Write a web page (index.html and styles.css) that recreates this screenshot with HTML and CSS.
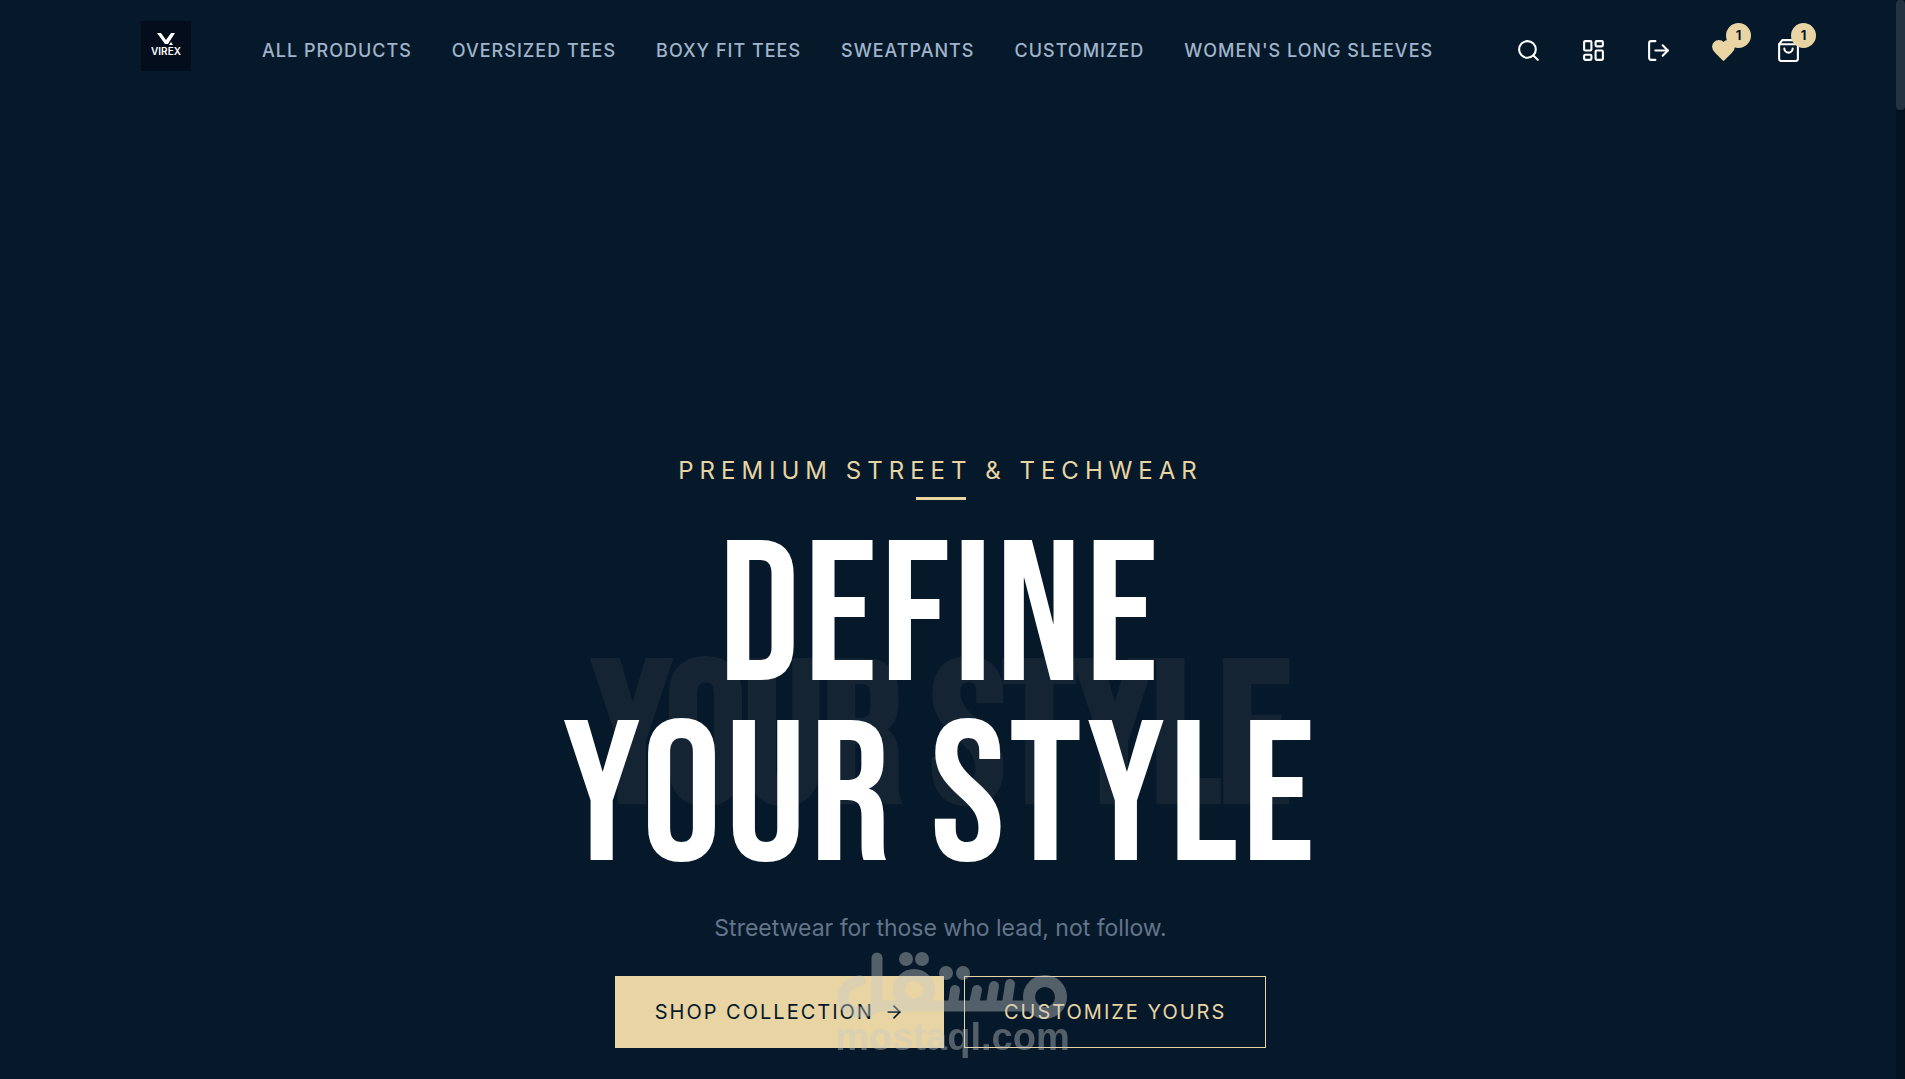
FILE: index.html
```html
<!DOCTYPE html>
<html lang="en">
<head>
    <meta charset="UTF-8">
    <meta name="viewport" content="width=device-width, initial-scale=1.0">
    <title>VIREX | Premium Street &amp; Techwear</title>
    <link rel="stylesheet" href="styles.css">
</head>
<body>
    <header class="header">
        <a href="#" class="logo" aria-label="Virex home">
            <svg class="logo-mark" viewBox="0 0 18 12" aria-hidden="true">
                <path d="M0 0h4l5 7 5-7h4l-7 11H8z" fill="#fff"/>
                <path d="M12 12l2-3 2 3z" fill="#fff"/>
            </svg>
            <span class="logo-name">VIREX</span>
        </a>

        <nav class="nav">
            <a href="#">ALL PRODUCTS</a>
            <a href="#">OVERSIZED TEES</a>
            <a href="#">BOXY FIT TEES</a>
            <a href="#">SWEATPANTS</a>
            <a href="#">CUSTOMIZED</a>
            <a href="#">WOMEN'S LONG SLEEVES</a>
        </nav>

        <div class="actions">
            <button class="icon-btn" aria-label="Search">
                <svg viewBox="0 0 24 24"><circle cx="11" cy="11" r="8"/><path d="m21 21-4.3-4.3"/></svg>
            </button>
            <button class="icon-btn" aria-label="Dashboard">
                <svg viewBox="0 0 24 24"><rect x="3" y="3" width="7" height="9" rx="1"/><rect x="14" y="3" width="7" height="5" rx="1"/><rect x="14" y="12" width="7" height="9" rx="1"/><rect x="3" y="16" width="7" height="5" rx="1"/></svg>
            </button>
            <button class="icon-btn" aria-label="Log out">
                <svg viewBox="0 0 24 24"><path d="M9 21H5a2 2 0 0 1-2-2V5a2 2 0 0 1 2-2h4"/><path d="m16 17 5-5-5-5"/><path d="M21 12H9"/></svg>
            </button>
            <button class="icon-btn wishlist" aria-label="Wishlist">
                <svg viewBox="0 0 24 24"><path d="M19 14c1.49-1.46 3-3.21 3-5.5A5.5 5.5 0 0 0 16.5 3c-1.76 0-3 .5-4.5 2-1.5-1.5-2.74-2-4.5-2A5.5 5.5 0 0 0 2 8.5c0 2.3 1.5 4.05 3 5.5l7 7Z"/></svg>
                <span class="badge">1</span>
            </button>
            <button class="icon-btn" aria-label="Cart">
                <svg viewBox="0 0 24 24"><path d="M6 2 3 6v14a2 2 0 0 0 2 2h14a2 2 0 0 0 2-2V6l-3-4Z"/><path d="M3 6h18"/><path d="M16 10a4 4 0 0 1-8 0"/></svg>
                <span class="badge">1</span>
            </button>
        </div>
    </header>

    <main class="hero">
        <p class="tagline">PREMIUM STREET &amp; TECHWEAR</p>
        <div class="title-wrap">
            <span class="ghost" aria-hidden="true">YOUR STYLE</span>
            <h1 class="title">DEFINE<br>YOUR STYLE</h1>
        </div>
        <p class="subtitle">Streetwear for those who lead, not follow.</p>
        <div class="hero-buttons">
            <button class="btn btn-primary">
                SHOP COLLECTION
                <svg viewBox="0 0 24 24" aria-hidden="true"><path d="M5 12h14"/><path d="m12 5 7 7-7 7"/></svg>
            </button>
            <button class="btn btn-outline">CUSTOMIZE YOURS</button>
        </div>
    </main>

    <!-- watermark -->
    <div class="watermark" aria-hidden="true">
        <svg viewBox="0 0 230 68">
            <g fill="none" stroke="currentColor" stroke-linecap="round" stroke-linejoin="round">
                <path stroke-width="11" d="M22 29C-1 31 0 61 21 60 33 60 39 56 39 44V6"/>
                <path stroke-width="11" d="M39 54H189"/>
                <circle stroke-width="12" cx="76" cy="38" r="15"/>
                <path stroke-width="10" d="M115 52l2-14M136 52l3-14M153 52l3-18M169 52l3-20"/>
                <circle stroke-width="12" cx="207" cy="45" r="16"/>
            </g>
            <g fill="currentColor">
                <circle cx="68" cy="7" r="7"/>
                <circle cx="84" cy="7" r="7"/>
                <circle cx="108" cy="21" r="7"/>
                <circle cx="125" cy="21" r="7"/>
            </g>
        </svg>
        <span>mostaql.com</span>
    </div>

    <div class="scroll-track" aria-hidden="true"><div class="scroll-thumb"></div></div>
</body>
</html>
```

FILE: styles.css
```css
* {
    box-sizing: border-box;
    margin: 0;
    padding: 0;
}

body {
    font-family: Inter, "Liberation Sans", sans-serif;
    background: #06192a;
    color: #fff;
    min-height: 100vh;
    overflow: hidden;
}

a {
    text-decoration: none;
}

button {
    font-family: inherit;
    cursor: pointer;
}

/* Header */
.header {
    display: flex;
    align-items: center;
    height: 100px;
    padding: 0 93px 0 141px;
}

.logo {
    display: flex;
    flex-direction: column;
    align-items: center;
    width: 50px;
    height: 50px;
    margin-bottom: 8px;
    padding-top: 12px;
    background: #030d1b;
    color: #fff;
}

.logo-mark {
    width: 18px;
    height: 12px;
}

.logo-name {
    font-size: 10px;
    line-height: 12px;
    font-weight: 600;
}

.nav {
    display: flex;
    gap: 40px;
    margin-left: 71px;
    padding-top: 2px;
}

.nav a {
    color: #a0b4cb;
    font-size: 18px;
    line-height: 24px;
    font-weight: 500;
    letter-spacing: 1px;
    white-space: nowrap;
}

.actions {
    display: flex;
    gap: 17px;
    margin-left: auto;
}

.icon-btn {
    position: relative;
    display: flex;
    align-items: center;
    justify-content: center;
    width: 48px;
    height: 48px;
    border: none;
    background: none;
    color: #fff;
}

.icon-btn svg {
    width: 25px;
    height: 25px;
    fill: none;
    stroke: currentColor;
    stroke-width: 2;
    stroke-linecap: round;
    stroke-linejoin: round;
}

.wishlist svg {
    fill: #e8d5a3;
    stroke: #e8d5a3;
}

.badge {
    position: absolute;
    top: -3px;
    right: -4px;
    width: 25px;
    height: 25px;
    border-radius: 50%;
    background: #e8d5a3;
    color: #06192a;
    font-size: 13px;
    line-height: 24px;
    font-weight: 700;
    text-align: center;
}

/* Hero */
.hero {
    display: flex;
    flex-direction: column;
    align-items: center;
    padding: 354px 24px 31px 0;
    text-align: center;
}

.tagline {
    position: relative;
    color: #e8d5a3;
    font-size: 24px;
    line-height: 34px;
    letter-spacing: 6px;
}

.tagline::after {
    content: "";
    position: absolute;
    left: 50%;
    bottom: -12px;
    width: 50px;
    height: 3px;
    margin-left: -25px;
    background: #e8d5a3;
}

.title-wrap {
    position: relative;
    margin-top: 42px;
    font-family: "Bebas Neue", "Liberation Sans Narrow", sans-serif;
    font-size: 200px;
    white-space: nowrap;
}

.title {
    position: relative;
    font-size: 200px;
    line-height: 180px;
    font-weight: 400;
    letter-spacing: 4px;
}

.ghost {
    position: absolute;
    inset: 0;
    color: #142433;
    line-height: 422px;
    font-weight: 700;
    letter-spacing: -2px;
}

.subtitle {
    margin-top: 22px;
    color: #64748b;
    font-size: 23px;
    line-height: 32px;
}

.hero-buttons {
    display: flex;
    gap: 20px;
    margin-top: 32px;
}

.btn {
    display: flex;
    align-items: center;
    gap: 10px;
    height: 72px;
    padding: 0 39px;
    border: 1px solid #e8d5a3;
    font-size: 20px;
    font-weight: 400;
    letter-spacing: 2px;
    white-space: nowrap;
}

.btn svg {
    width: 20px;
    height: 20px;
    fill: none;
    stroke: currentColor;
    stroke-width: 2;
    stroke-linecap: round;
    stroke-linejoin: round;
}

.btn-primary {
    background: #e8d5a3;
    color: #06192a;
}

.btn-outline {
    background: transparent;
    color: #e8d5a3;
}

/* Watermark over the buttons */
.watermark {
    position: fixed;
    left: 50%;
    bottom: 25px;
    display: flex;
    flex-direction: column;
    align-items: center;
    width: 230px;
    margin-left: -115px;
    color: #c8c8c8;
    opacity: 0.4;
    pointer-events: none;
}

.watermark svg {
    width: 230px;
    height: 68px;
    overflow: visible;
}

.watermark span {
    font-family: "Liberation Sans", Arial, sans-serif;
    font-size: 38px;
    line-height: 34px;
    font-weight: 700;
}

/* Scrollbar */
.scroll-track {
    position: fixed;
    top: 0;
    right: 0;
    bottom: 0;
    width: 9px;
    background: #04111f;
}

.scroll-thumb {
    height: 110px;
    border-radius: 4px;
    background: #233343;
}
```
